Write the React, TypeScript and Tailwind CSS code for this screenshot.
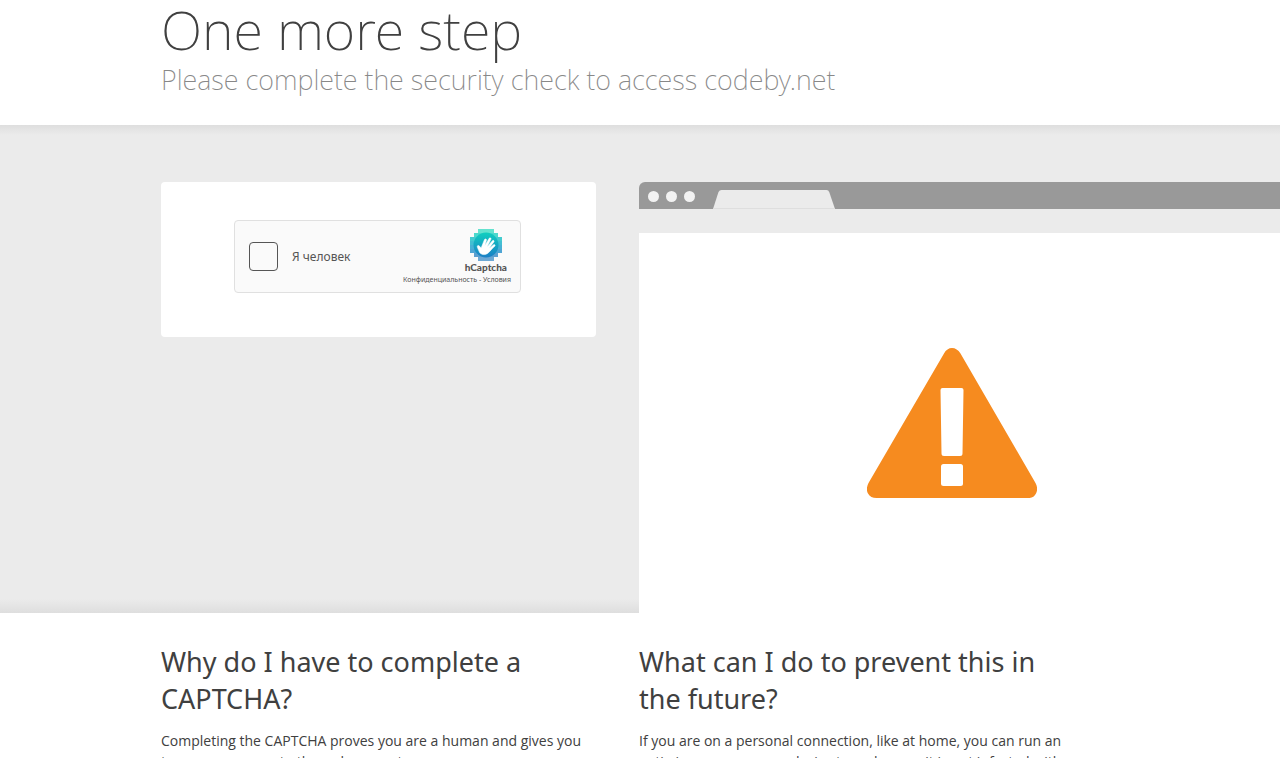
import React, { useState } from 'react';

const palette = ['#3fdcc4', '#22d0c2', '#16bfc4', '#14b0c8', '#1a9fcb', '#2390cb', '#3488c6', '#4a93cb'];

const HCaptchaLogo = () => (
  <svg viewBox="0 0 32 32" className="size-8" aria-hidden="true">
    <defs>
      <linearGradient id="disc" x1="0" y1="0" x2="0" y2="1">
        <stop offset="0" stopColor="#10cfbf" />
        <stop offset="1" stopColor="#1b7fc6" />
      </linearGradient>
    </defs>
    {palette.map((color, row) => {
      const inset = row === 0 || row === 7 ? 8 : row === 1 || row === 6 ? 4 : 0;
      return <rect key={color} x={inset} y={row * 4} width={32 - inset * 2} height="4" fill={color} opacity="0.8" />;
    })}
    <circle cx="16" cy="16" r="12.5" fill="url(#disc)" />
    <path
      d="M9.6 23.6 7.4 18.4c-.3-.9-.1-1.7.6-1.9.8-.2 1.4.5 2.1 1.3l1 1.2 3.2-8.1c.3-.9 1-1.2 1.6-.9.6.2.8.8.5 1.6l-1.7 5.2 4.3-7.2c.4-.8 1-1 1.6-.6.5.3.6.9.2 1.6l-3.6 7.1 5-5.8c.5-.6 1.1-.7 1.6-.3.5.5.4 1-.1 1.6l-4.5 6 4.2-3.3c.6-.5 1.2-.5 1.5 0 .4.5.2 1-.4 1.5-2.4 2.1-4 4.3-5.8 6.1-2.5 2.6-6.6 3-9.1.1z"
      fill="#fff"
      stroke="#fff"
      strokeWidth="0.5"
    />
  </svg>
);

const WarningIcon = () => (
  <svg viewBox="0 0 170 150" className="h-[150px] w-[170px]" role="img" aria-label="Warning">
    <path
      d="M77 5.5Q80 0 85 0T93.5 5.5L168.5 135Q171.5 140.5 169 145.5T160.5 150H9.5Q3.5 150 1 145.5T1.5 135Z"
      fill="#f68b1f"
    />
    <path d="M75.5 40h19q2 0 2 2l-1 63.5q0 2.5-2.5 2.5H77q-2.5 0-2.5-2.5L73.5 42q0-2 2-2Z" fill="#fff" />
    <rect x="74" y="116" width="22" height="22" rx="2.5" fill="#fff" />
  </svg>
);

const CaptchaBox = () => {
  const [checked, setChecked] = useState(false);

  return (
    <div className="rounded-sm bg-white pt-[38px] pr-[75px] pb-11 pl-[73px]">
      <div className="flex h-[73px] items-center rounded-sm border border-[#e0e0e0] bg-[#fafafa] pr-[9px] pl-[14px]">
        <input
          id="human"
          type="checkbox"
          checked={checked}
          onChange={(e) => setChecked(e.target.checked)}
          className="size-[29px] shrink-0 appearance-none rounded-sm border border-[#555] bg-[#fafafa] checked:bg-teal-500"
        />
        <label htmlFor="human" className="ml-[14px] text-[12px] whitespace-nowrap text-[#555]">
          Я человек
        </label>
        <div className="ml-auto flex flex-col items-end text-[#555]">
          <div className="mr-1 flex flex-col items-center">
            <HCaptchaLogo />
            <span className="font-[Lato] text-[10px] leading-[13px] font-black">hCaptcha</span>
          </div>
          <p className="text-[7px] leading-[11px] whitespace-nowrap">
            <a href="#privacy">Конфиденциальность</a> - <a href="#terms">Условия</a>
          </p>
        </div>
      </div>
    </div>
  );
};

const BrowserWindow = () => (
  <div className="w-screen">
    <div className="flex h-[27px] items-end rounded-tl-md bg-[#999]">
      <div className="flex gap-[7px] pr-[18px] pb-[7px] pl-[9px]">
        <span className="size-[11px] rounded-full bg-[#f2f2f2]" />
        <span className="size-[11px] rounded-full bg-[#f2f2f2]" />
        <span className="size-[11px] rounded-full bg-[#f2f2f2]" />
      </div>
      <svg viewBox="0 0 122 19" className="h-[19px] w-[122px]" aria-hidden="true">
        <path d="M0 19 5.5 2Q6.5 0 8.5 0H113.5Q115.5 0 116.2 2L122 19Z" fill="#ebebeb" />
        <path d="M0 18.5H122" stroke="#dedede" />
      </svg>
    </div>
    <div className="mt-6 h-[380px] bg-white pt-[115px] pl-[228px]">
      <WarningIcon />
    </div>
  </div>
);

const columns = 'mx-auto grid max-w-[958px] grid-cols-2 gap-[43px] pr-[45px]';

const App = () => {
  return (
    <div className="h-screen overflow-hidden bg-white font-['Noto_Sans',sans-serif] text-[#404040]">
      <header className="mx-auto max-w-[958px] pb-[23px]">
        <h1 className="text-[54px] leading-[58px] font-extralight">One more step</h1>
        <h2 className="text-[27px] leading-[44px] font-extralight text-[#888]">
          Please complete the security check to access codeby.net
        </h2>
      </header>

      <section className="overflow-hidden bg-[#ebebeb] bg-[linear-gradient(to_bottom,#dedede,#ebebeb_10px,#ebebeb_calc(100%-14px),#dedede)] pt-[57px]">
        <div className={columns}>
          <div>
            <CaptchaBox />
          </div>
          <BrowserWindow />
        </div>
      </section>

      <section className={`${columns} pt-[30px]`}>
        <div>
          <h2 className="text-[27px] leading-[37px]">Why do I have to complete a CAPTCHA?</h2>
          <p className="mt-[13px] font-['Open_Sans',sans-serif] text-[14px] leading-[21px]">
            Completing the CAPTCHA proves you are a human and gives you temporary access to the web property.
          </p>
        </div>
        <div>
          <h2 className="text-[27px] leading-[37px]">What can I do to prevent this in the future?</h2>
          <p className="mt-[13px] font-['Open_Sans',sans-serif] text-[14px] leading-[21px]">
            If you are on a personal connection, like at home, you can run an anti-virus scan on your device to make
            sure it is not infected with malware.
          </p>
        </div>
      </section>
    </div>
  );
};

export default App;
